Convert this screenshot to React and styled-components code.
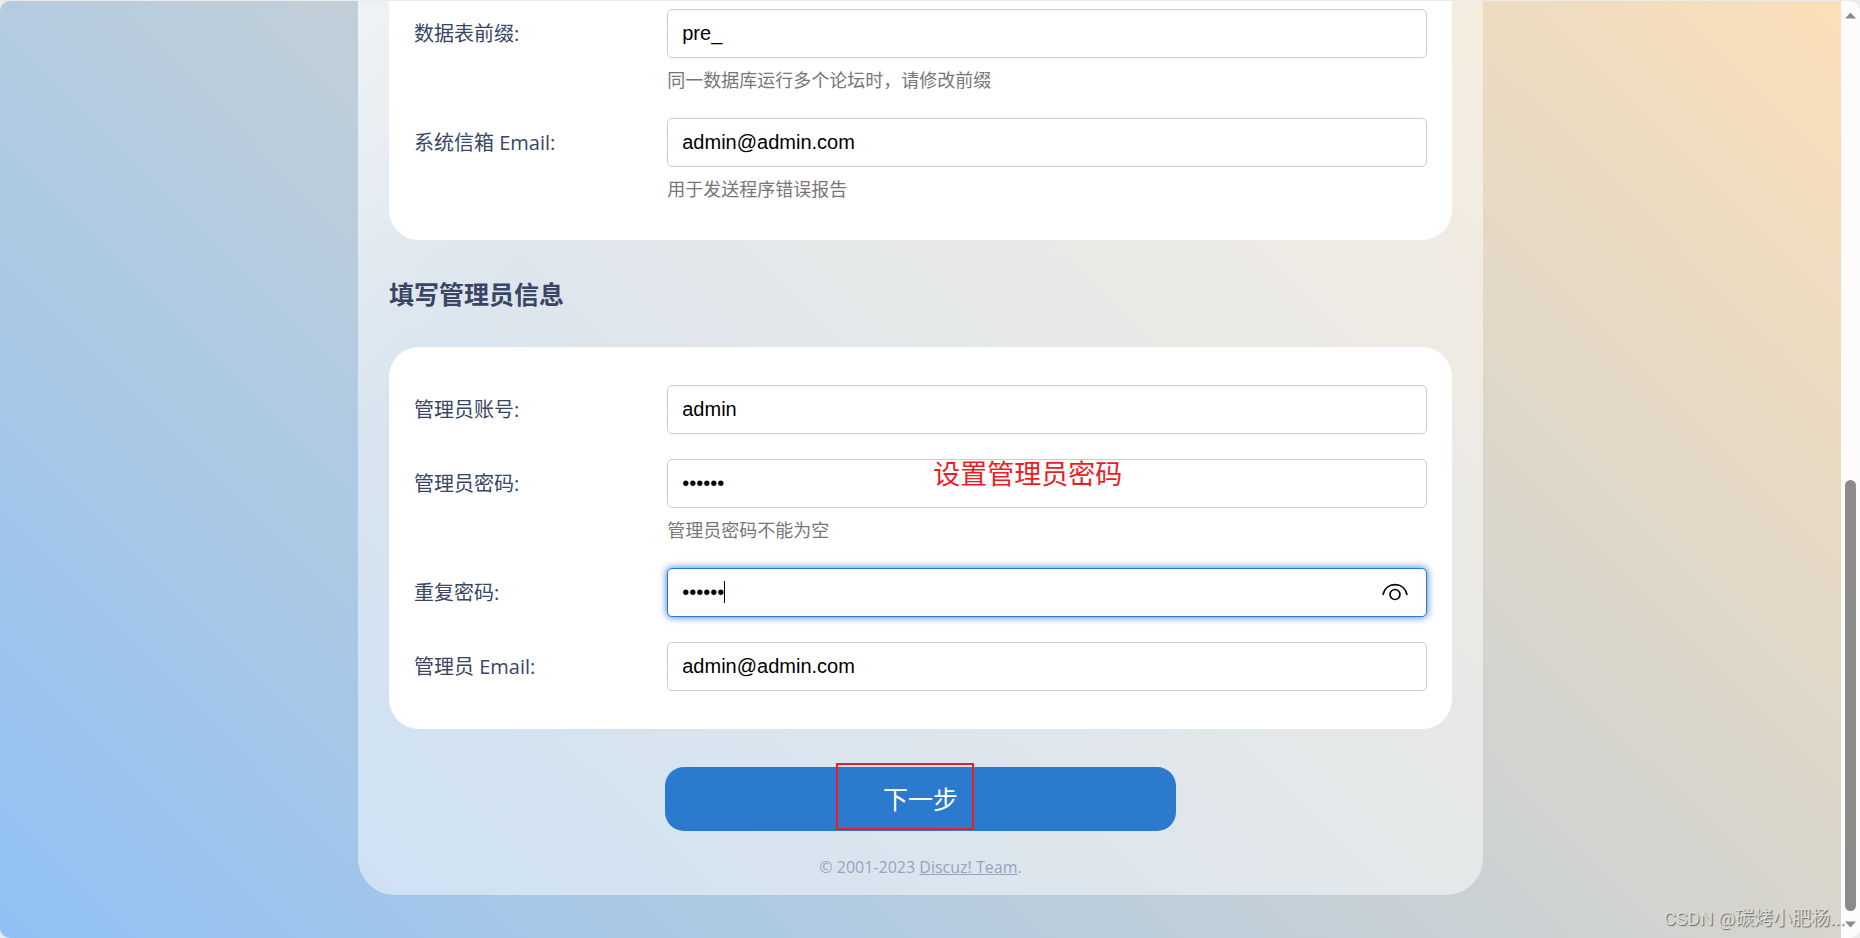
import React from 'react';
import styled, { createGlobalStyle } from 'styled-components';

const GlobalStyle = createGlobalStyle`
    * {
        box-sizing: border-box;
    }
    body {
        margin: 0;
        background: #ebebeb;
        color: #3a4564;
        font-family: 'Open Sans', 'Noto Sans CJK SC', sans-serif;
    }
`;

const Window = styled.div`
    display: flex;
    margin-top: 1px;
    border-radius: 10px;
    overflow: hidden;
`;

const Page = styled.div`
    position: relative;
    flex: 1;
    display: flex;
    justify-content: center;
    padding-bottom: 43px;
    background: linear-gradient(45deg, #90c1f3, #fbdfb9);
`;

const Container = styled.main`
    width: 100%;
    max-width: 1125px;
    padding: 0 31px 14px;
    border-radius: 0 0 37px 37px;
    background: linear-gradient(135deg, rgba(255, 255, 255, 0.74), rgba(255, 255, 255, 0.49) 300px);
`;

const Card = styled.section`
    display: flex;
    flex-direction: column;
    gap: 25px;
    padding: ${(props) => (props.$continued ? '8px' : '38px')} 25px 38px;
    border-radius: ${(props) => (props.$continued ? '0 0 30px 30px' : '30px')};
    background: #fff;
`;

const Title = styled.h2`
    margin: 0;
    padding: 36px 0 35px;
    font-size: 25px;
    line-height: 36px;
    font-weight: 700;
`;

const Row = styled.div`
    display: grid;
    grid-template-columns: 1fr 3fr;
`;

const Label = styled.label`
    font-size: 20px;
    line-height: 49px;
`;

const Control = styled.div`
    position: relative;
`;

const Input = styled.input`
    display: block;
    width: 100%;
    height: 49px;
    padding: 0 14px;
    border: 1px solid #ccc;
    border-radius: 5px;
    outline: none;
    background: #fff;
    color: #000;
    font-family: 'Liberation Sans', 'Noto Sans CJK SC', sans-serif;
    font-size: 20px;

    &:focus {
        border-color: #2b7acd;
        box-shadow: 0 0 7px 1px rgba(43, 122, 205, 0.8);
        caret-color: transparent;
    }
`;

const Caret = styled.span`
    position: absolute;
    top: 13px;
    left: 57px;
    width: 1px;
    height: 22px;
    background: #000;
`;

const Hint = styled.p`
    margin: 10px 0 0;
    color: #777;
    font-size: 18px;
    line-height: 25px;
`;

const EyeButton = styled.button`
    position: absolute;
    top: 10px;
    right: 19px;
    display: flex;
    padding: 0;
    border: 0;
    background: none;
    color: #000;
`;

const Note = styled.span`
    position: absolute;
    top: -4px;
    left: 35%;
    color: #ed1c24;
    font-size: 27px;
    line-height: 38px;
    white-space: nowrap;
`;

const Actions = styled.div`
    position: relative;
    width: 511px;
    max-width: 100%;
    margin: 38px auto 0;
`;

const SubmitButton = styled.button`
    display: block;
    width: 100%;
    height: 64px;
    padding: 0 0 3px;
    border: 0;
    border-radius: 19px;
    background: #2b7acd;
    color: #fff;
    font-family: inherit;
    font-size: 25px;
`;

const Highlight = styled.div`
    position: absolute;
    top: -4px;
    left: 171px;
    width: 138px;
    height: 67px;
    border: 2px solid #ed1c24;
    pointer-events: none;
`;

const Footer = styled.footer`
    margin-top: 23px;
    color: #96a3c0;
    font-size: 16px;
    line-height: 27px;
    text-align: center;

    a {
        color: inherit;
    }
`;

const Watermark = styled.div`
    position: absolute;
    right: -4px;
    bottom: 6px;
    color: #dcded9;
    font-family: Roboto, 'Noto Sans CJK SC', sans-serif;
    font-size: 19px;
    line-height: 26px;
    text-shadow: 1px 1px 1px #666;
    white-space: nowrap;
`;

const Scrollbar = styled.div`
    display: flex;
    flex-direction: column;
    align-items: center;
    width: 19px;
    padding: 11px 0 10px;
    background: #fcfcfc;
    color: #8b8b8b;
`;

const Thumb = styled.div`
    width: 11px;
    height: 431px;
    margin: auto 0 10px;
    border-radius: 6px;
    background: #8b8b8b;
`;

const fields = {
    forum: [
        { id: 'tablepre', label: '数据表前缀:', value: 'pre_', hint: '同一数据库运行多个论坛时，请修改前缀' },
        { id: 'sysemail', label: '系统信箱 Email:', value: 'admin@admin.com', hint: '用于发送程序错误报告' },
    ],
    admin: [
        { id: 'username', label: '管理员账号:', value: 'admin' },
        {
            id: 'password',
            label: '管理员密码:',
            value: '123456',
            type: 'password',
            hint: '管理员密码不能为空',
            note: '设置管理员密码',
        },
        { id: 'password2', label: '重复密码:', value: '123456', type: 'password', focused: true },
        { id: 'email', label: '管理员 Email:', value: 'admin@admin.com' },
    ],
};

function EyeIcon() {
    return (
        <svg width="26" height="28" viewBox="0 0 26 28" fill="none" stroke="currentColor" strokeWidth="1.6">
            <path d="M1 17C2.2 10.200 7.200 6.600 13 6.600s10.800 3.600 12 10.400" />
            <circle cx="13" cy="16.500" r="5" />
        </svg>
    );
}

function Field({ id, label, value, type = 'text', hint, note, focused }) {
    return (
        <Row>
            <Label htmlFor={id}>{label}</Label>
            <Control>
                <Input id={id} type={type} defaultValue={value} autoFocus={focused} />
                {focused && (
                    <>
                        <Caret />
                        <EyeButton type="button" aria-label="显示密码">
                            <EyeIcon />
                        </EyeButton>
                    </>
                )}
                {note && <Note>{note}</Note>}
                {hint && <Hint>{hint}</Hint>}
            </Control>
        </Row>
    );
}

function Arrow({ down }) {
    return (
        <svg width="11" height="7" viewBox="0 0 11 7" fill="currentColor">
            <path d={down ? 'M0 0.500h11L5.500 6.500z' : 'M0 6.500h11L5.500 0.500z'} />
        </svg>
    );
}

function App() {
    return (
        <>
            <GlobalStyle />
            <Window>
                <Page>
                    <Container>
                        <Card $continued>
                            {fields.forum.map((field) => (
                                <Field key={field.id} {...field} />
                            ))}
                        </Card>
                        <Title>填写管理员信息</Title>
                        <Card>
                            {fields.admin.map((field) => (
                                <Field key={field.id} {...field} />
                            ))}
                        </Card>
                        <Actions>
                            <SubmitButton type="button">下一步</SubmitButton>
                            <Highlight />
                        </Actions>
                        <Footer>
                            © 2001-2023 <a href="#team">Discuz! Team</a>.
                        </Footer>
                    </Container>
                    <Watermark>CSDN @碳烤小肥杨...</Watermark>
                </Page>
                <Scrollbar>
                    <Arrow />
                    <Thumb />
                    <Arrow down />
                </Scrollbar>
            </Window>
        </>
    );
}

export default App;
